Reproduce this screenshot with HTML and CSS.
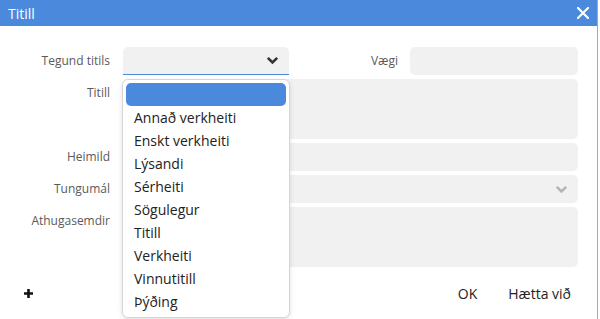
FILE: index.html
```html
<!DOCTYPE html>
<html lang="is">
<head>
  <meta charset="UTF-8">
  <title>Titill</title>
  <link rel="stylesheet" href="styles.css">
</head>
<body>
  <div class="dialog">
    <header class="dialog-head">
      <span class="dialog-title">Titill</span>
      <button class="close" type="button" aria-label="Loka">
        <svg width="12" height="12" viewBox="0 0 12 12">
          <path d="M1 1 L11 11 M11 1 L1 11" stroke="#fff" stroke-width="2.2" stroke-linecap="round"/>
        </svg>
      </button>
    </header>

    <div class="dialog-body">
      <label class="lbl">Tegund titils</label>
      <div class="first-row">
        <div class="select-wrap">
          <div class="field select open">
            <svg class="chev" width="13" height="9" viewBox="0 0 13 9">
              <path d="M1.8 1.8 L6.5 6.5 L11.2 1.8" fill="none" stroke="#333" stroke-width="2.6"/>
            </svg>
          </div>
          <ul class="options">
            <li class="active"></li>
            <li>Annað verkheiti</li>
            <li>Enskt verkheiti</li>
            <li>Lýsandi</li>
            <li>Sérheiti</li>
            <li>Sögulegur</li>
            <li>Titill</li>
            <li>Verkheiti</li>
            <li>Vinnutitill</li>
            <li>Þýðing</li>
          </ul>
        </div>
        <label class="lbl lbl-inline">Vægi</label>
        <div class="field weight"></div>
      </div>

      <label class="lbl">Titill</label>
      <div class="field area"></div>

      <label class="lbl">Heimild</label>
      <div class="field"></div>

      <label class="lbl">Tungumál</label>
      <div class="field select">
        <svg class="chev light" width="13" height="9" viewBox="0 0 13 9">
          <path d="M1.8 1.8 L6.5 6.5 L11.2 1.8" fill="none" stroke="#b5b5b5" stroke-width="2.6"/>
        </svg>
      </div>

      <label class="lbl">Athugasemdir</label>
      <div class="field area"></div>
    </div>

    <footer class="dialog-foot">
      <button class="btn add" type="button">
        <svg width="11" height="11" viewBox="0 0 11 11">
          <path d="M5.5 1 V10 M1 5.5 H10" stroke="#111" stroke-width="2.6"/>
        </svg>
      </button>
      <div class="actions">
        <button class="btn" type="button">OK</button>
        <button class="btn" type="button">Hætta við</button>
      </div>
    </footer>
  </div>
</body>
</html>
```

FILE: styles.css
```css
* {
  box-sizing: border-box;
}

body {
  margin: 0;
  background-color: #fff;
  font-family: "Open Sans", "Noto Sans", sans-serif;
}

.dialog {
  width: 598px;
  height: 319px;
  background-color: #fff;
  border-right: 1px solid #a9a9a9;
}

.dialog-head {
  height: 26px;
  background-color: #4a89dc;
  color: #fff;
  display: flex;
  align-items: center;
  justify-content: space-between;
  padding: 0 8px 0 8px;
}

.dialog-title {
  font-size: 14px;
}

.close {
  background: none;
  border: none;
  padding: 0;
  width: 12px;
  height: 12px;
  display: flex;
  cursor: pointer;
}

.dialog-body {
  display: grid;
  grid-template-columns: 110px 1fr;
  column-gap: 13px;
  row-gap: 4px;
  padding: 21px 19px 0 0;
}

.lbl {
  font-size: 12px;
  color: #5a5a5a;
  text-align: right;
  line-height: 28px;
}

.first-row {
  display: flex;
  align-items: center;
  gap: 12px;
}

.lbl-inline {
  flex: 1;
}

.field {
  height: 28px;
  background-color: #f1f1f1;
  border-radius: 5px;
}

.field.area {
  height: 60px;
}

.field.weight {
  width: 168px;
}

.select {
  display: flex;
  align-items: center;
  justify-content: flex-end;
  padding-right: 10px;
}

.select.open {
  border-radius: 5px 5px 0 0;
  border-bottom: 1px solid #4a89dc;
}

.select-wrap {
  position: relative;
  width: 166px;
}

.options {
  position: absolute;
  top: calc(100% + 4px);
  left: -1px;
  width: 168px;
  margin: 0;
  padding: 3px 3px 4px 3px;
  list-style: none;
  background-color: #fff;
  border: 1px solid #d6d6d6;
  border-radius: 6px;
  box-shadow: 0 2px 5px rgba(0, 0, 0, 0.12);
  z-index: 10;
}

.options li {
  height: 23px;
  line-height: 23px;
  padding: 0 8px;
  font-size: 14px;
  color: #222;
  border-radius: 5px;
}

.options li.active {
  background-color: #4a89dc;
}

.dialog-foot {
  display: flex;
  align-items: center;
  justify-content: space-between;
  padding: 13px 20px 0 17px;
}

.actions {
  display: flex;
  gap: 19px;
}

.btn {
  background: none;
  border: none;
  font-family: inherit;
  font-size: 14px;
  color: #222;
  padding: 4px 6px;
  cursor: pointer;
}

.btn.add {
  display: flex;
  padding: 4px 6px;
}
```
